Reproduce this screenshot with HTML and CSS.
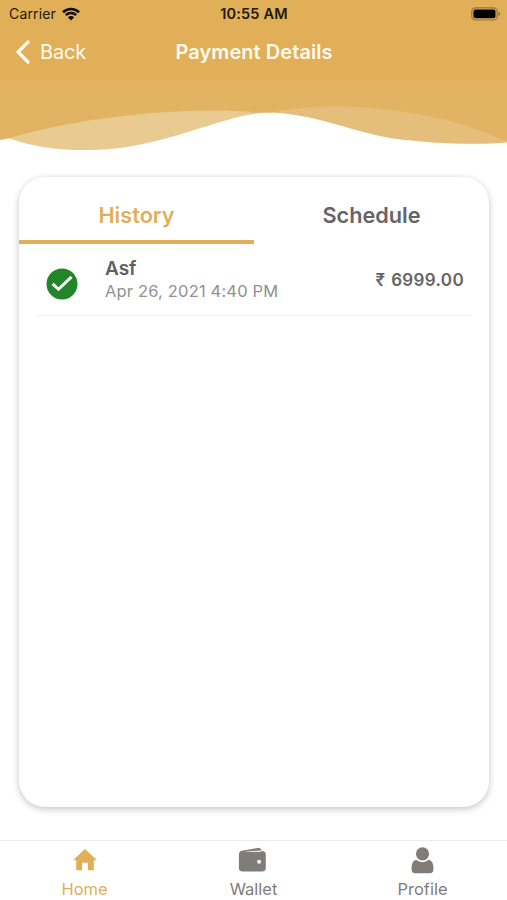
FILE: index.html
```html
<!DOCTYPE html>
<html lang="en">
<head>
<meta charset="utf-8">
<title>Payment Details</title>
<link rel="stylesheet" href="styles.css">
</head>
<body>
<div class="app">
  <header class="top">
    <div class="status">
      <div class="carrier"><span>Carrier</span>
        <svg class="wifi" viewBox="0 0 18 14"><path d="M1 5.2a11.6 11.6 0 0 1 16 0" /><path d="M3.8 8.1a7.5 7.5 0 0 1 10.4 0"/><path class="solid" d="M9 13.4 5.9 10.2a4.4 4.4 0 0 1 6.2 0z"/></svg>
      </div>
      <span class="time">10:55 AM</span>
      <svg class="battery" viewBox="0 0 30 14"><rect class="shell" x=".8" y=".8" width="25.4" height="12.2" rx="3.6"/><rect x="2.5" y="2.5" width="22" height="8.8" rx="2"/><path class="cap" d="M27.5 4.6c2.2 1 2.2 3.6 0 4.6z"/></svg>
    </div>
    <nav class="navbar">
      <a class="back"><svg viewBox="0 0 16 24"><path d="M13 2 3 12l10 10"/></svg><span>Back</span></a>
      <h1>Payment Details</h1>
    </nav>
  </header>
  <svg class="waves" viewBox="0 80 507 76" preserveAspectRatio="none">
    <path class="wave-left" d="M8 138C80 100 180 100 265 105V112.500C225 115 175 142 115 148.500C75 152 42 150 8 138Z"/>
    <path class="wave-right" d="M250 105H507V142.500C480 145 430 144 390 138C350 131 320 116 276 112.800Q264 112 250 114Z"/>
    <path class="wave-base" d="M0 80H507V141.500L503 140C480 130 456 121 420 114.500C370 105 310 104 271 112.500Q263 112 254 112C180 106 75 118 8 138.500L0 140Z"/>
  </svg>
  <main>
    <section class="card">
      <div class="tabs"><button class="tab active"><span>History</span></button><button class="tab"><span>Schedule</span></button></div>
      <div class="payment">
        <svg class="check" viewBox="0 0 32 32"><circle cx="16" cy="16" r="15.500"/><path d="m6.700 15.800 5.800 5.500L25.500 8.900"/></svg>
        <div class="info"><strong>Asf</strong><span class="date">Apr 26, 2021 4:40 PM</span></div>
        <span class="amount"><span class="rupee">₹</span> 6999.00</span>
      </div>
    </section>
  </main>
  <footer class="bottom">
    <a class="item current"><svg viewBox="0 0 28 30"><path d="M14 4 2 15.300h3.200V25.300h5.900v-7.500h5.800v7.500h5.900V15.300H26z"/></svg><span>Home</span></a>
    <a class="item"><svg class="wallet" viewBox="0 0 28 30"><path d="M2 6 19.500 2.900Q22.500 2.600 23 5.500L22 8H2z"/><rect x=".3" y="6" width="27" height="20.500" rx="3.800"/><path class="slit" d="M7.500 6.600 21.500 5.400l2 .9-1 .8H8z"/><circle class="dot" cx="20.600" cy="16.800" r="2"/></svg><span>Wallet</span></a>
    <a class="item"><svg class="person" viewBox="0 0 28 30"><circle cx="14" cy="8.800" r="6.600"/><path d="M7.600 14.800Q14 19.600 20.400 14.800 25 16 25 23.500 25 28.300 21.500 28.300H6.500Q3 28.300 3 23.500 3 16 7.600 14.800z"/></svg><span>Profile</span></a>
  </footer>
</div>
</body>
</html>
```
FILE: styles.css
```css
* { box-sizing: border-box; }
body { margin: 0; background: #fff; font-family: Inter, "Liberation Sans", sans-serif; }
.app { width: 507px; height: 900px; display: flex; flex-direction: column; overflow: hidden; }
.top { height: 80px; flex: none; background: #e0af58; }
.status { height: 28px; padding: 0 6px 0 9px; display: grid; grid-template-columns: 1fr auto 1fr; align-items: center; font-size: 14px; line-height: 28px; color: #21190c; }
.carrier { display: flex; align-items: center; gap: 6px; letter-spacing: .15px; }
.time { font-weight: 600; font-size: 14.5px; letter-spacing: .2px; transform: translateX(-1px); }
.wifi { width: 18px; height: 14px; fill: none; stroke: #100c05; stroke-width: 2.600; }
.wifi .solid { fill: #100c05; stroke: none; }
.battery { width: 30px; height: 14px; justify-self: end; fill: #000; }
.battery .shell { fill: none; stroke: #967437; stroke-width: 1.200; }
.battery .cap { fill: #967437; }
.navbar { height: 48px; padding-left: 15px; display: grid; grid-template-columns: 160.500px auto; align-items: center; color: #fffaf0; }
.back { display: flex; align-items: center; gap: 9px; font-size: 20px; letter-spacing: -.2px; }
.back svg { width: 16px; height: 24px; fill: none; stroke: currentColor; stroke-width: 3.200; stroke-linecap: round; }
h1 { margin: 0; font-size: 20px; font-weight: 600; white-space: nowrap; letter-spacing: .06px; }
.waves { display: block; width: 507px; height: 76px; flex: none; }
.wave-base { fill: #e2b363; }
.wave-left { fill: #e9ca90; }
.wave-right { fill: #e6be7b; }
main { flex: 1; padding: 21px 18px 33px 19px; }
.card { height: 630px; border-radius: 26px; background: #fff; box-shadow: 0 2px 7px rgba(0,0,0,.24); overflow: hidden; }
.tabs { display: grid; grid-template-columns: 1fr 1fr; }
.tab { height: 67px; padding: 12px 0 0; border: 0; border-bottom: 4px solid transparent; background: none; font: 600 21.700px/28px Inter, sans-serif; color: #656565; }
.tab.active { color: #e0af58; border-bottom-color: #e0af58; }
.payment { height: 72px; margin: 0 19px; padding: 0 6px 0 8px; display: flex; border-bottom: 1px solid #f0f0f0; }
.check { width: 32px; height: 32px; margin-top: 24px; fill: #228527; }
.check path { fill: none; stroke: #fff; stroke-width: 3; }
.info { display: flex; flex-direction: column; margin-left: 27px; padding-top: 13px; }
.info strong { font-size: 19px; line-height: 24px; font-weight: 600; color: #616161; }
.date { font-size: 16.500px; line-height: 20px; letter-spacing: .17px; color: #919191; }
.amount { margin: 25px 0 0 auto; font-size: 17px; line-height: 22px; font-weight: 600; letter-spacing: .35px; color: #656565; }
.rupee { margin-right: 1px; }
.bottom { height: 60px; flex: none; display: grid; grid-template-columns: repeat(3, 1fr); border-top: 1px solid #ececec; }
.item { display: flex; flex-direction: column; align-items: center; padding-top: 4px; color: #807d79; font-size: 16.500px; line-height: 20px; }
.item svg { width: 28px; height: 30px; margin-bottom: 4px; fill: currentColor; }
.item .wallet { transform: translateX(-1.500px); }
.item .person { transform: translateX(-.5px); }
.item.current { color: #e0af58; }
.item .slit { fill: #e5e5e5; }
.item .dot { fill: #fff; }
```
